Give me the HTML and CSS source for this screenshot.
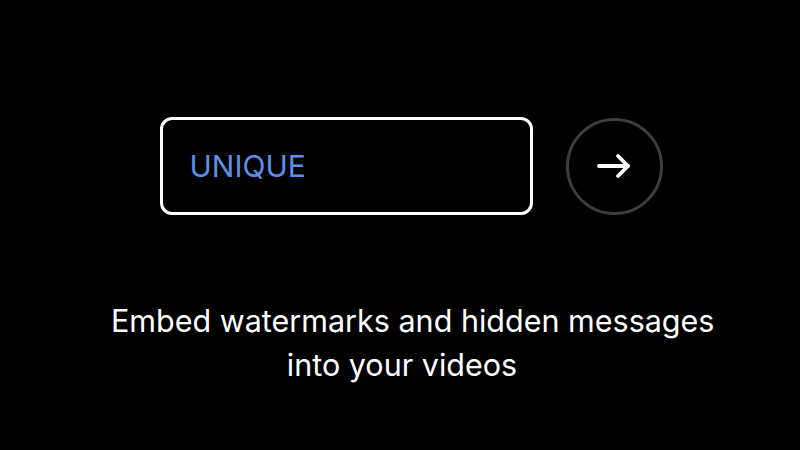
FILE: index.html
```html
<!DOCTYPE html>
<html lang="en">
<head>
    <meta charset="UTF-8">
    <meta name="viewport" content="width=device-width, initial-scale=1.0">
    <title>Watermark</title>
    <link rel="stylesheet" href="styles.css">
</head>
<body>
    <div class="container">
        <form class="entry">
            <input type="text" class="message" value="UNIQUE" aria-label="Message">
            <button type="submit" class="go" aria-label="Submit">
                <svg width="36" height="26" viewBox="0 0 36 26" fill="none" stroke="#fff" stroke-width="3.8" stroke-linecap="round" stroke-linejoin="round">
                    <path d="M3 13h29"/>
                    <path d="M22 3l10 10-10 10"/>
                </svg>
            </button>
        </form>
        <p class="caption">Embed watermarks and hidden messages<br>into your videos</p>
    </div>
</body>
</html>
```

FILE: styles.css
```css
* {
    box-sizing: border-box;
    margin: 0;
    padding: 0;
}

html, body {
    height: 100%;
}

body {
    font-family: Inter, "Noto Sans", sans-serif;
    background-color: #000;
    color: #fff;
}

.container {
    height: 100%;
    display: flex;
    flex-direction: column;
    align-items: center;
    padding-top: 117px;
    padding-left: 22px;
}

.entry {
    display: flex;
    align-items: center;
    gap: 33px;
}

.message {
    width: 373px;
    height: 98px;
    padding: 0 27px;
    background: #000;
    border: 3px solid #fff;
    border-radius: 12px;
    color: #5b8fe8;
    font-family: inherit;
    font-size: 30px;
    outline: none;
}

.go {
    width: 97px;
    height: 97px;
    border-radius: 50%;
    border: 3px solid #3d3d3d;
    background: #000;
    display: flex;
    align-items: center;
    justify-content: center;
    cursor: pointer;
}

.caption {
    width: 582px;
    margin-top: 84px;
    margin-right: 18px;
    text-align: center;
    white-space: nowrap;
    font-size: 30.5px;
    line-height: 44px;
}
```
